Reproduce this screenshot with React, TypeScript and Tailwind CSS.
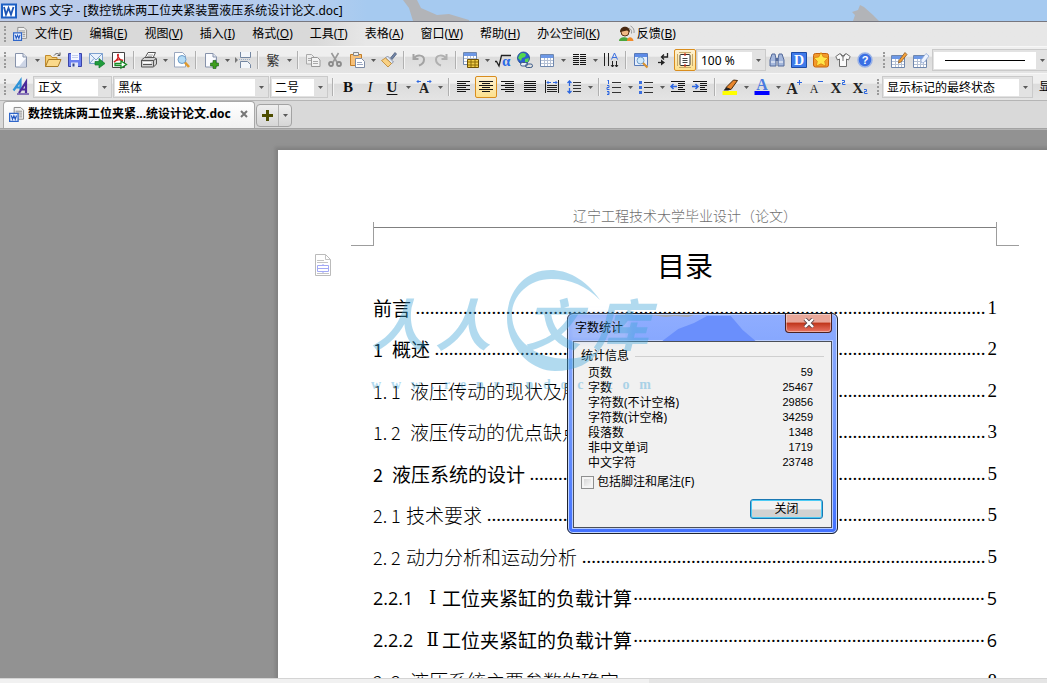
import type { ReactNode } from "react";
import clsx from "clsx";

const UI_FONT = "font-['Noto_Sans','Noto_Sans_CJK_SC',sans-serif]";
const HEI_FONT = "font-['Noto_Sans_CJK_SC',sans-serif]";

const MENUS = [
  ["文件", "F"],
  ["编辑", "E"],
  ["视图", "V"],
  ["插入", "I"],
  ["格式", "O"],
  ["工具", "T"],
  ["表格", "A"],
  ["窗口", "W"],
  ["帮助", "H"],
  ["办公空间", "K"],
];

type TocRow = {
  num?: string;
  roman?: string;
  title: string;
  dots: number;
  page: string;
  kind: "chapter" | "section" | "tight" | "sans";
};

const TOC: TocRow[] = [
  { title: "前言", dots: 120, page: "1", kind: "chapter" },
  { num: "1", title: "概述", dots: 116, page: "2", kind: "chapter" },
  { num: "1. 1", title: "液压传动的现状及展望", dots: 80, page: "2", kind: "section" },
  { num: "1. 2", title: "液压传动的优点缺点", dots: 84, page: "3", kind: "section" },
  { num: "2", title: "液压系统的设计", dots: 96, page: "5", kind: "chapter" },
  { num: "2. 1", title: "技术要求", dots: 105, page: "5", kind: "tight" },
  { num: "2. 2", title: "动力分析和运动分析", dots: 85, page: "5", kind: "tight" },
  { num: "2.2.1", roman: "Ⅰ", title: "工位夹紧缸的负载计算", dots: 74, page: "5", kind: "sans" },
  { num: "2.2.2", roman: "Ⅱ", title: "工位夹紧缸的负载计算", dots: 74, page: "6", kind: "sans" },
  { num: "2. 3", title: "液压系统主要参数的确定", dots: 76, page: "8", kind: "section" },
];

const NUM_WIDTH = {
  chapter: "w-[19px]",
  section: "w-[37px] font-light",
  tight: "w-[33px] font-light",
  sans: "w-[50px]",
};

const STATS = [
  ["页数", "59"],
  ["字数", "25467"],
  ["字符数(不计空格)", "29856"],
  ["字符数(计空格)", "34259"],
  ["段落数", "1348"],
  ["非中文单词", "1719"],
  ["中文字符", "23748"],
];

function Svg({ children, size = "size-4" }: { children: ReactNode; size?: string }) {
  return (
    <svg viewBox="0 0 16 16" className={clsx(size, "shrink-0 overflow-visible")} fill="none">
      {children}
    </svg>
  );
}

const Page = () => (
  <>
    <path d="M2.500 1.500h7.500l3.500 3.500v10h-11z" fill="#fbfcff" stroke="#8793ab" />
    <path d="M10 1.500v3.500h3.500" fill="#dfe5f0" stroke="#8793ab" />
    <path d="M6 14.500L13 6v8.500z" fill="#cdd5e6" />
  </>
);

const Lines = ({ rows }: { rows: [number, number][] }) => (
  <>
    {rows.map(([x, w], i) => (
      <path key={i} d={`M${x} ${2.5 + i * 2}h${w}`} stroke="#151515" />
    ))}
  </>
);

const Grid = ({ x = 1, y = 2 }: { x?: number; y?: number }) => (
  <g transform={`translate(${x} ${y})`}>
    <path d="M.5.5h13v12H.5z" fill="#fff" stroke="#6f87ad" />
    <path d="M1 1h12v3H1z" fill="#6d98e6" />
    <path d="M4.500 4v8M7.500 4v8M10.500 4v8M1 6.500h12M1 9.500h12" stroke="#b4c0d4" />
  </g>
);

const WpsDoc = () => (
  <>
    <path d="M5.500.5h7l3 3v9.500h-10z" fill="#f1f1f1" stroke="#858585" />
    <path d="M7 4.500h7M7 6.500h7M11 8.500h3M11 10.500h3" stroke="#8b8b8b" />
    <path d="M.7 6.700h9v8.600h-9z" fill="#eef5ff" stroke="#2f66c9" strokeWidth="1.400" />
    <path d="M2.500 9l1.200 4 1.500-3.500L6.700 13 8 9" stroke="#2459c2" strokeWidth="1.300" />
  </>
);

const icons = {
  newDoc: <Page />,
  open: (
    <>
      <path d="M.5 14.500v-11h5l1.500 2h5v2" fill="#f6cf74" stroke="#c18a2c" />
      <path d="M.5 14.500l3-7H16l-3 7z" fill="#fbd98a" stroke="#a77a25" />
      <path d="M9 3.500c2-2.500 4-2.500 5.500-.5M12.500 3.500h2.500v-3" stroke="#555" />
    </>
  ),
  save: (
    <>
      <path d="M1.500 1.500h13v13h-13z" fill="#6a7ff0" stroke="#3a44a8" />
      <path d="M4 1h8v7H4z" fill="#f4f7ff" />
      <path d="M5 3.500h6M5 5.500h6" stroke="#c3cdea" />
      <path d="M4 10.500h7v4.500H4z" fill="#e4e8f8" />
      <path d="M5.500 11.500h2v3h-2z" fill="#33447f" />
    </>
  ),
  mail: (
    <>
      <path d="M.5 1.500h13v10H.5z" fill="#e9f1fc" stroke="#7da0cf" />
      <path d="M.5 1.500L7 8l6.500-6.500M.5 11.500l4.500-5" stroke="#7da0cf" />
      <path d="M6 9.500h4v-3l6 5-6 4.500v-3H6z" fill="#1f9c3c" stroke="#13752a" strokeWidth=".7" />
    </>
  ),
  pdf: (
    <>
      <path d="M1.500.5h12v15h-12z" fill="#fff" stroke="#444" />
      <path d="M3 10c3-1.500 4.500-5 4.200-7.500C6 2 6.500 7.500 12 8.500 9 7 5 8 3 10z" stroke="#d32020" strokeWidth="1.400" />
      <path d="M4 11.500h6v-2.500l5.500 3.500-5.500 3.500v-2.500H4z" fill="#fff" stroke="#178a25" strokeWidth="1.300" />
    </>
  ),
  print: (
    <>
      <path d="M4 6l3-5.500h7.500L12 6" fill="#fff" stroke="#555" />
      <path d="M7 3h5M6 4.500h5" stroke="#aaa" />
      <path d="M.5 8l3-2.500h10l2 1.500v5l-3 3H.5z" fill="#d2d2d2" stroke="#555" />
      <path d="M.5 8.500h12v6M15.500 6.500l-3 2M2 12.500h9" stroke="#555" />
      <path d="M2 10h8v1.500H2z" fill="#fff" />
    </>
  ),
  preview: (
    <>
      <path d="M1.500.5h8l3 3v11.500h-11z" fill="#fff" stroke="#9aa7be" />
      <circle cx="9" cy="7.500" r="4" fill="#b4dcf6" stroke="#6d9cc9" />
      <path d="M12 10.500l4 4.500" stroke="#e09a2c" strokeWidth="2.600" />
    </>
  ),
  addPage: (
    <>
      <Page />
      <path d="M10 8.500h3v2.500h2.500v3H13v2.500h-3V14H7.500v-3H10z" fill="#3f9e1f" stroke="#155f15" strokeWidth=".6" />
    </>
  ),
  pageBreak: (
    <>
      <path d="M5.500 0v5.500h10V0M5.500 16v-6.500h7l3 3V16" fill="#f3f6fa" stroke="#7487a2" />
      <path d="M4 7.500h12" stroke="#9eb0c9" strokeDasharray="1 1" />
      <path d="M0 5l3 3-3 3z" fill="#777" />
    </>
  ),
  trad: (
    <text x="8" y="13" textAnchor="middle" fontSize="13" fill="#333" className={HEI_FONT}>
      繁
    </text>
  ),
  copy: (
    <>
      <path d="M1.500 2.500h5l2.500 2.500v7h-7.500z" fill="#eee" stroke="#aaa" />
      <path d="M6.500 5.500h6l2.500 2.500v6.500H6.500z" fill="#f3f3f3" stroke="#999" />
      <path d="M8 9.500h5M8 11.500h5M3 6.500h3M3 8.500h3" stroke="#aaa" />
    </>
  ),
  cut: (
    <>
      <path d="M4.500 1l6 10M11.500 1l-6 10" stroke="#999" strokeWidth="1.600" />
      <circle cx="4" cy="12" r="2" stroke="#8a8a8a" strokeWidth="1.800" />
      <circle cx="12" cy="12" r="2" stroke="#8a8a8a" strokeWidth="1.800" />
    </>
  ),
  paste: (
    <>
      <path d="M1.500 2.500h11v11h-11z" fill="#f7c078" stroke="#c27e28" />
      <path d="M4.500.5h5v3h-5z" fill="#eee" stroke="#888" />
      <path d="M6.500 6.500h6l3 3v6h-9z" fill="#fff" stroke="#7d8ba5" />
      <path d="M8 10.500h5M8 12.500h6" stroke="#9aa7c2" />
    </>
  ),
  brush: (
    <>
      <path d="M9.500 6L14 .5l1.500 1.500L11 7.500z" fill="#7186a8" stroke="#4c5c78" strokeWidth=".8" />
      <path d="M6.500 4l6 6-2 1.500-6-5.500z" fill="#dfe6f2" stroke="#76839c" strokeWidth=".8" />
      <path d="M4.500 6L.5 8.500l6.500 6.500 3.500-3.500z" fill="#f9d183" stroke="#ba8430" strokeWidth=".8" />
    </>
  ),
  undo: <path d="M2.500 2v5h5M3 6.500c3-4.500 10-3.500 10 1 0 3-2 5-5 6" stroke="#a3a3a3" strokeWidth="2" />,
  redo: <path d="M13.500 2v5h-5M13 6.500C10 2 3 3 3 7.500c0 3 2 5 5 6" stroke="#b0b0b0" strokeWidth="2" />,
  insertTable: (
    <>
      <Grid x={0} y={0} />
      <path d="M4.500 7.500h11v8h-11z" fill="#f2cf4a" stroke="#6d5005" />
      <path d="M5 10h10M5 13h10M8 8v7M12 8v7" stroke="#8a6a08" />
    </>
  ),
  formula: (
    <>
      <path d="M0 9.500h1.500L4 14 6.500 3.500H16" stroke="#222" strokeWidth="1.300" />
      <text x="7" y="14" fontSize="15" fontWeight="bold" fill="#2c6be6" className="font-['Liberation_Serif',serif]">
        α
      </text>
    </>
  ),
  globe: (
    <>
      <circle cx="6.500" cy="6" r="6" fill="#2b5fd0" stroke="#174488" strokeWidth=".8" />
      <path d="M3 2c2-1.500 5-1 6 .5L8 5 5 6 4 9 1 6zM8 7l4-1-1 4H8z" fill="#54d74f" />
      <rect x="3.500" y="10.500" width="7" height="3.500" rx="1.700" fill="#e7eef8" stroke="#3c5b88" />
      <rect x="8.500" y="12" width="7" height="3.500" rx="1.700" stroke="#3c5b88" />
    </>
  ),
  table: <Grid />,
  columns: (
    <path
      d="M2 2.500h6M2 4.500h6M2 6.500h6M2 8.500h6M2 10.500h6M2 12.500h6M9 2.500h6M9 4.500h6M9 6.500h6M9 8.500h6M9 10.500h6M9 12.500h6"
      stroke="#151515"
    />
  ),
  textDir: (
    <>
      <path d="M1.500 1v13M5.500 1v13M9.500 9v6M13.500 9v6M8 13l1.500 2 1.500-2M12 13l1.500 2 1.500-2" stroke="#222" />
      <path d="M8.500 7.500L11.500 1l3 6.500M9.500 5.500h4" stroke="#3b6fe0" />
    </>
  ),
  findWindow: (
    <>
      <path d="M1.500 1.500h13v12h-13z" fill="#e6effd" stroke="#587ab8" />
      <path d="M2 2h12v3H2z" fill="#5d8be8" />
      <circle cx="7.500" cy="8.500" r="3.500" fill="#cfe8fa" stroke="#6f9dca" />
      <path d="M10 11l4.500 4.500" stroke="#d79131" strokeWidth="2.200" />
    </>
  ),
  marks: (
    <>
      <path d="M12.500 1v4H7M9 2.500L6.500 5 9 7.500" stroke="#222" strokeWidth="1.300" />
      <path d="M3 10.500h5" stroke="#222" strokeWidth="1.300" />
      <path d="M6 7.500l4 3-4 3z" fill="#222" />
    </>
  ),
  fitPage: (
    <>
      <path d="M.5 2v12M15.500 2v12M2 .5h12M2 15.500h12" stroke="#c7a96b" />
      <rect x="3" y="2.500" width="10" height="11" rx="1" fill="#fff" stroke="#333" />
      <path d="M5.500 6.500h5M5.500 8.500h5M5.500 10.500h5" stroke="#444" />
      <path d="M8 1v3M8 12v3" stroke="#e0301e" strokeWidth="1.200" />
    </>
  ),
  find: (
    <>
      <path d="M3 2h3l1 5v7H1V8zM10 2h3l2 6v6H9V7z" fill="#a4b7dc" stroke="#546a9a" />
      <path d="M6.500 6h3v3h-3z" fill="#546a9a" />
      <path d="M2 10h4M10 10h4" stroke="#fff" />
    </>
  ),
  dict: (
    <>
      <path d="M.5.5h15v15H.5z" fill="#3f7bea" stroke="#1d4ba6" />
      <text x="8" y="13" textAnchor="middle" fontSize="14" fontWeight="bold" fill="#fff" className="font-['Liberation_Serif',serif]">
        D
      </text>
    </>
  ),
  star: (
    <>
      <rect x=".5" y="1.500" width="15" height="13.500" rx="2" fill="#f39a2c" stroke="#c4620c" />
      <path d="M8 .5l2.300 4.500 5 .7-3.600 3.500 1 5L8 11.800l-4.700 2.400 1-5L.7 5.700l5-.7z" fill="#ffe64a" stroke="#d9820c" strokeWidth=".8" />
    </>
  ),
  shirt: (
    <>
      <path d="M5 1.500L.8 4.500l1.700 3.500 2-1v7.500h7V7l2 1 1.700-3.500L11 1.500 8 4z" fill="#fafafa" stroke="#6e6e6e" />
      <path d="M5.500 2L8 5.500 10.500 2M8 5.500V9" stroke="#6e6e6e" />
    </>
  ),
  help: (
    <>
      <circle cx="8" cy="8" r="7" fill="#3b6fe4" stroke="#9bb3e6" strokeWidth="1.500" />
      <text x="8" y="12" textAnchor="middle" fontSize="11" fontWeight="bold" fill="#fff" className="font-['Liberation_Sans',sans-serif]">
        ?
      </text>
    </>
  ),
  drawTable: (
    <>
      <Grid x={0} y={3} />
      <path d="M8 8.500L14 .5l2 2-6 7.500-2.500 1z" fill="#f5a13a" stroke="#8b5a22" strokeWidth=".8" />
    </>
  ),
  eraseTable: (
    <>
      <Grid x={0} y={3} />
      <path d="M8 8l5-6.500 3 2.500-5 6.500-2.500.5z" fill="#edf3ff" stroke="#8fa8d4" strokeWidth=".8" />
    </>
  ),
  styles: (
    <>
      <path d="M.5 11.500L7.500 1.500V11M3 8.500h5" stroke="#2f93d8" strokeWidth="2.200" />
      <path d="M6 14L13 3v11M8.500 10.500H13" stroke="#4a2a9a" strokeWidth="2.200" />
      <path d="M4 15h12" stroke="#4a2a9a" strokeWidth="1.200" />
    </>
  ),
  charScale: (
    <>
      <text x="8" y="14" textAnchor="middle" fontSize="14" fontWeight="bold" fill="#222" className="font-['Liberation_Serif',serif]">
        A
      </text>
      <path d="M1 2.500h4M2.500 1L1 2.500 2.500 4M11 2.500h4M13.500 1L15 2.500 13.500 4" stroke="#2c66e0" />
    </>
  ),
  alignLeft: <Lines rows={[[1, 13], [1, 9], [1, 13], [1, 9], [1, 13], [1, 9]]} />,
  alignCenter: <Lines rows={[[1, 14], [4, 8], [1, 14], [4, 8], [1, 14], [4, 8]]} />,
  alignRight: <Lines rows={[[1, 13], [5, 9], [1, 13], [5, 9], [1, 13], [5, 9]]} />,
  justify: <Lines rows={[[2, 12], [2, 12], [2, 12], [2, 12], [2, 12], [2, 12]]} />,
  distribute: (
    <>
      <path d="M1.500 1v13M14.500 1v13M3 6.500h10M3 8.500h10M3 10.500h10M3 12.500h10" stroke="#222" />
      <path d="M3 3.500h4M9 3.500h4M4.500 2L3 3.500 4.500 5M11.500 2L13 3.500 11.500 5" stroke="#2c66e0" />
    </>
  ),
  spacing: (
    <>
      <path d="M7 3.500h8M7 6.500h8M7 9.500h8M7 12.500h8" stroke="#333" />
      <path d="M3.500 2v5M3.500 9v5M1.500 4l2-2 2 2M1.500 12l2 2 2-2" stroke="#2c66e0" strokeWidth="1.300" />
    </>
  ),
  numbered: (
    <>
      <path d="M6 3.500h9M6 8.500h9M6 13.500h9" stroke="#333" />
      <path d="M2.500 1v4M1.500 1.500h1M1 6.500h2v2H1v2h2.500M1 12.500h2v3H1M1.500 14h1.500" stroke="#2c66e0" />
    </>
  ),
  bullets: (
    <>
      <path d="M6 3.500h9M6 8.500h9M6 13.500h9" stroke="#333" />
      <path d="M1 2h3v3H1zM1 7h3v3H1zM1 12h3v3H1z" fill="#3b6fe0" />
    </>
  ),
  outdent: (
    <>
      <path d="M1 2.500h14M8 4.500h7M8 6.500h7M8 8.500h5M8 10.500h7M1 12.500h14" stroke="#151515" />
      <path d="M1 7.500h6M3.500 5L1 7.500 3.500 10" stroke="#2c66e0" strokeWidth="1.500" />
    </>
  ),
  indent: (
    <>
      <path d="M1 2.500h14M8 4.500h7M8 6.500h7M8 8.500h5M8 10.500h7M1 12.500h14" stroke="#151515" />
      <path d="M0 7.500h6M3.500 5L6 7.500 3.500 10" stroke="#2c66e0" strokeWidth="1.500" />
    </>
  ),
  highlight: (
    <>
      <path d="M4 8.500L11.500 1l4 .5-6.500 9z" fill="#e8852c" stroke="#4a2b0a" />
      <path d="M4 8.500L1.500 11.500h4.500l3-1z" fill="#222" />
      <path d="M.5 12H15v4H.5z" fill="#ff0" />
    </>
  ),
  fontColor: (
    <>
      <text x="8" y="11" textAnchor="middle" fontSize="16" fontWeight="bold" fill="#4a7be0" className="font-['Liberation_Serif',serif]">
        A
      </text>
      <path d="M.5 12h15v4H.5z" fill="#00f" />
    </>
  ),
  grow: (
    <>
      <text x="6" y="14.500" textAnchor="middle" fontSize="16" fontWeight="bold" fill="#222" className="font-['Liberation_Serif',serif]">
        A
      </text>
      <path d="M11 3.500h5M13.500 1v5" stroke="#2c66e0" />
    </>
  ),
  shrink: (
    <>
      <text x="6" y="14" textAnchor="middle" fontSize="12" fill="#222" className="font-['Liberation_Serif',serif]">
        A
      </text>
      <path d="M10 2.500h5" stroke="#2c66e0" />
    </>
  ),
  superscript: (
    <>
      <text x="6" y="13.500" textAnchor="middle" fontSize="15" fontWeight="bold" fill="#222" className="font-['Liberation_Serif',serif]">
        X
      </text>
      <path d="M12 1.500h2.500v2H12.500v2h3" stroke="#2c66e0" />
    </>
  ),
  subscript: (
    <>
      <text x="6" y="13.500" textAnchor="middle" fontSize="15" fontWeight="bold" fill="#222" className="font-['Liberation_Serif',serif]">
        X
      </text>
      <path d="M12 10.500h2.500v2H12.500v2h3" stroke="#2c66e0" />
    </>
  ),
};

type IconName = keyof typeof icons;

function Tool({ icon, label, active }: { icon: IconName; label: string; active?: boolean }) {
  return (
    <button
      type="button"
      aria-label={label}
      className={clsx(
        "flex h-[22px] w-[22px] shrink-0 items-center justify-center",
        active && "rounded-xs border border-[#d98d1e] bg-gradient-to-b from-[#fdf1d3] to-[#fde08c]",
      )}
    >
      <Svg>{icons[icon]}</Svg>
    </button>
  );
}

function LetterTool({ children, label, className }: { children: ReactNode; label: string; className?: string }) {
  return (
    <button
      type="button"
      aria-label={label}
      className={clsx("w-[22px] shrink-0 text-center font-['Liberation_Serif',serif] text-[15px] leading-[22px] text-[#111]", className)}
    >
      {children}
    </button>
  );
}

function Caret() {
  return (
    <svg viewBox="0 0 5 3" className="h-[3px] w-[5px] shrink-0" fill="#5a5a5a">
      <path d="M0 0h5L2.500 3z" />
    </svg>
  );
}

function Drop({ label }: { label: string }) {
  return (
    <button type="button" aria-label={label} className="flex h-[22px] w-[10px] shrink-0 items-center justify-center">
      <Caret />
    </button>
  );
}

function Sep() {
  return (
    <span className="flex w-2 shrink-0 justify-center">
      <span className="h-[18px] w-[2px] border-l border-r border-l-[#b0b0b0] border-r-[#f4f4f4]" />
    </span>
  );
}

function Grip({ className }: { className?: string }) {
  return (
    <span className={clsx("flex shrink-0 justify-center", className)}>
      <span className="h-4 w-0 border-l-2 border-dotted border-[#9a9a9a]" />
    </span>
  );
}

function Combo({ value, label, width, line }: { value: string; label: string; width: string; line?: boolean }) {
  return (
    <span className={clsx("relative flex h-[22px] shrink-0 items-center border border-[#cacaca] bg-[#e2e2e2] p-px", width)}>
      <select aria-label={label} className="h-[17px] min-w-0 flex-1 appearance-none bg-white pl-[3px] text-[12px] leading-[17px] text-black">
        <option>{value}</option>
      </select>
      {line && <span className="absolute left-3 right-6 h-px bg-black" />}
      <span className="flex w-3 justify-center">
        <Caret />
      </span>
    </span>
  );
}

function TitleBar() {
  return (
    <header className="flex h-[22px] shrink-0 items-center gap-1 border-b border-[#77777f] bg-[#a6caf0] bg-gradient-to-r from-[#bccbea] via-[#b4cdee] via-30% to-[#a6caf0] to-35% pl-px text-[12px] text-black">
      <Svg>
        <path d="M0 .5h16v15H0z" fill="#1c5fc4" />
        <path d="M2 2.500h12v11H2z" fill="#fff" />
        <path d="M3 4l2 7.500L7.500 5 10 11.500 12.500 4" stroke="#1d55b5" strokeWidth="1.800" />
      </Svg>
      <h1 className="whitespace-nowrap">WPS 文字 - [数控铣床两工位夹紧装置液压系统设计论文.doc]</h1>
      <svg viewBox="0 0 480 21" className="ml-[52px] h-[21px] w-[480px]" fill="#b2b4b8">
        <path d="M4 0h14l4 8 16 7 12-1 20 6v1H14L10 8z" />
        <path d="M461 5l4 2 9 8 6 6h-26l2-6-3-3 6-2z" />
      </svg>
    </header>
  );
}

function MenuBar() {
  return (
    <nav className="flex h-6 shrink-0 items-center bg-gradient-to-r from-[#d9d9d9] from-30% to-[#e7e7e7] to-35% text-[12px] text-black">
      <Grip className="w-[10px]" />
      <span className="flex w-[17px] justify-end">
        <Svg size="size-[14px]">
          <WpsDoc />
        </Svg>
      </span>
      <ul className="flex gap-px">
        {MENUS.map(([name, key]) => (
          <li key={key}>
            <button type="button" className="whitespace-nowrap px-2">
              {name}(<u>{key}</u>)
            </button>
          </li>
        ))}
      </ul>
      <button type="button" className="ml-[11px] flex items-center gap-0.5 whitespace-nowrap">
        <Svg>
          <circle cx="6" cy="6" r="4" fill="#f3b985" stroke="#5b3314" />
          <path d="M1 6c0-7 10-7 10 0L8 4.500z" fill="#4a2a12" />
          <path d="M0 15c0-5 10-5 10 0z" fill="#4ba63c" />
          <path d="M8 15c0-5 6-5 6.500 0z" fill="#f08b2a" />
          <path d="M10 2c2 1 3 3 2.500 5.500M11.500 0c3 1.500 4 4 3.500 7" stroke="#999" />
        </Svg>
        <span>
          反馈(<u>B</u>)
        </span>
      </button>
    </nav>
  );
}

const BAR =
  "flex h-[27px] shrink-0 items-center overflow-hidden border-t border-[#f7f7f7] bg-gradient-to-b from-[#efefef] from-35% via-[#dcdcdc] via-40% to-[#e4e4e4]";

function StandardBar() {
  return (
    <div className={BAR}>
      <Grip className="w-[10px]" />
      <Tool icon="newDoc" label="新建" />
      <Drop label="新建选项" />
      <Tool icon="open" label="打开" />
      <Tool icon="save" label="保存" />
      <Tool icon="mail" label="邮件" />
      <Tool icon="pdf" label="输出为 PDF" />
      <Sep />
      <Tool icon="print" label="打印" />
      <Drop label="打印选项" />
      <Tool icon="preview" label="打印预览" />
      <Sep />
      <Tool icon="addPage" label="插入页" />
      <Drop label="插入页选项" />
      <Tool icon="pageBreak" label="分页符" />
      <Sep />
      <Tool icon="trad" label="繁体" />
      <Drop label="繁体选项" />
      <Sep />
      <Tool icon="copy" label="复制" />
      <Tool icon="cut" label="剪切" />
      <Tool icon="paste" label="粘贴" />
      <Drop label="粘贴选项" />
      <Tool icon="brush" label="格式刷" />
      <Sep />
      <Tool icon="undo" label="撤销" />
      <Tool icon="redo" label="恢复" />
      <Sep />
      <Tool icon="insertTable" label="插入表格" />
      <Drop label="表格选项" />
      <Tool icon="formula" label="公式" />
      <Tool icon="globe" label="超链接" />
      <Tool icon="table" label="表格" />
      <Drop label="网格选项" />
      <Tool icon="columns" label="分栏" />
      <Drop label="分栏选项" />
      <Tool icon="textDir" label="文字方向" />
      <Sep />
      <Tool icon="findWindow" label="导航" />
      <Tool icon="marks" label="段落标记" />
      <Tool icon="fitPage" label="页面视图" active />
      <Combo value="100 %" label="显示比例" width="w-[70px]" />
      <Tool icon="find" label="查找" />
      <Tool icon="dict" label="词典" />
      <Tool icon="star" label="素材" />
      <Tool icon="shirt" label="换肤" />
      <Tool icon="help" label="帮助" />
      <Grip className="ml-1 w-2" />
      <Tool icon="drawTable" label="绘制表格" />
      <Tool icon="eraseTable" label="擦除表格" />
      <Combo value="" label="线型" width="w-[118px]" line />
    </div>
  );
}

function FormatBar() {
  return (
    <div className={BAR}>
      <Grip className="w-[10px]" />
      <Tool icon="styles" label="样式和格式" />
      <span className="flex gap-px px-px">
        <Combo value="正文" label="样式" width="w-[79px]" />
        <Combo value="黑体" label="字体" width="w-[156px]" />
        <Combo value="二号" label="字号" width="w-[58px]" />
      </span>
      <Sep />
      <LetterTool label="加粗" className="font-bold">B</LetterTool>
      <LetterTool label="倾斜" className="italic">I</LetterTool>
      <LetterTool label="下划线" className="font-bold underline underline-offset-2">U</LetterTool>
      <Drop label="下划线选项" />
      <Tool icon="charScale" label="字符缩放" />
      <Drop label="缩放选项" />
      <Sep />
      <Tool icon="alignLeft" label="左对齐" />
      <Tool icon="alignCenter" label="居中" active />
      <Tool icon="alignRight" label="右对齐" />
      <Tool icon="justify" label="两端对齐" />
      <Tool icon="distribute" label="分散对齐" />
      <Tool icon="spacing" label="行距" />
      <Drop label="行距选项" />
      <Sep />
      <Tool icon="numbered" label="编号" />
      <Drop label="编号选项" />
      <Tool icon="bullets" label="项目符号" />
      <Drop label="符号选项" />
      <Tool icon="outdent" label="减少缩进" />
      <Tool icon="indent" label="增加缩进" />
      <Sep />
      <Tool icon="highlight" label="突出显示" />
      <Drop label="突出显示选项" />
      <Tool icon="fontColor" label="字体颜色" />
      <Drop label="颜色选项" />
      <Tool icon="grow" label="增大字号" />
      <Tool icon="shrink" label="减小字号" />
      <Tool icon="superscript" label="上标" />
      <Tool icon="subscript" label="下标" />
      <Grip className="ml-[3px] w-2" />
      <Combo value="显示标记的最终状态" label="审阅状态" width="w-[151px]" />
      <button type="button" className="ml-[6px] shrink-0 text-[12px]">显示</button>
    </div>
  );
}

function TabBar() {
  return (
    <div className="flex h-[29px] shrink-0 items-end border-b border-t border-b-[#a3a3a3] border-t-[#b5b5b5] bg-[#d9d9d9] pl-[3px] text-[12px]">
      <div className="flex h-[27px] w-[252px] items-center rounded-t-sm border border-b-0 border-[#a8a8a8] bg-gradient-to-b from-white to-[#f1f1f1] pb-0.5 pl-[5px] pr-[6px]">
        <Svg size="size-[15px]">
          <WpsDoc />
        </Svg>
        <span className="flex-1 whitespace-nowrap pl-1 font-bold text-black">数控铣床两工位夹紧...统设计论文.doc</span>
        <button type="button" aria-label="关闭标签">
          <svg viewBox="0 0 8 8" className="size-2" stroke="#777" strokeWidth="2">
            <path d="M1 1l6 6M7 1L1 7" />
          </svg>
        </button>
      </div>
      <div className="mb-px ml-px flex h-[23px] rounded-sm border border-[#a3a3a3] bg-gradient-to-b from-[#efefef] to-[#d6d6d6]">
        <button type="button" aria-label="新建标签" className="flex w-[21px] items-center justify-center">
          <svg viewBox="0 0 11 11" className="size-[11px]" stroke="#4d4d00" strokeWidth="3">
            <path d="M5.500 0v11M0 5.500h11" />
          </svg>
        </button>
        <button type="button" aria-label="标签列表" className="flex w-[13px] items-center justify-center border-l border-[#b5b5b5]">
          <Caret />
        </button>
      </div>
    </div>
  );
}

function TocLine({ row }: { row: TocRow }) {
  const sans = row.kind === "sans";
  const light = row.kind === "section" || row.kind === "tight";
  const digits = sans ? "font-['Open_Sans',sans-serif] text-[18px]" : "font-['Liberation_Serif',serif]";
  return (
    <li className="flex items-center whitespace-nowrap text-[19px] leading-[28px]">
      {row.num && (
        <span className={clsx("text-[18px]", NUM_WIDTH[row.kind], sans ? "font-['Open_Sans',sans-serif]" : HEI_FONT)}>{row.num}</span>
      )}
      {row.roman && <span className="w-[19px] text-center font-['DejaVu_Serif',serif] text-[18px]">{row.roman}</span>}
      <span className={clsx(HEI_FONT, light && "font-light")}>{row.title}</span>
      {/* the leader of the third level sits at mid height */}
      <span className={clsx("flex-1 text-right font-['Liberation_Serif',serif]", sans && "pb-2")}>{".".repeat(row.dots)}</span>
      <span className={clsx("pl-0.5", digits)}>{row.page}</span>
    </li>
  );
}

function Watermark() {
  return (
    <div className="pointer-events-none absolute left-[371px] top-[138px] h-[127px] w-[280px] text-[#3fa5d9] opacity-40">
      <svg viewBox="0 0 280 110" className="absolute left-0 top-0 h-[110px] w-[280px] overflow-visible" fill="currentColor">
        <path d="M229 32C214 10 195 2 180 2 150 2 136 28 136 50c0 30 24 53 48 53 21 0 36-8 45-21-14 8-29 10-45 8-24-4-42-20-43-42-1-20 17-37 39-37 20 0 35 7 49 21z" />
      </svg>
      <div className={clsx("absolute left-0 top-[18px] flex h-[72px] items-center text-[56px] font-bold italic leading-[72px]", HEI_FONT)}>
        <span>人</span>
        <span className="ml-2">人</span>
        <span className="ml-[34px]">文</span>
        <span className="ml-3">库</span>
      </div>
      <div className="absolute bottom-0 left-0 flex w-full justify-between font-['Liberation_Serif',serif] text-[14px] font-bold leading-[20px]">
        {"www.renrendoc.com".split("").map((c, i) => (
          <span key={i}>{c}</span>
        ))}
      </div>
    </div>
  );
}

function CountDialog() {
  return (
    <section
      role="dialog"
      aria-label="字数统计"
      className="absolute left-[567px] top-[183px] flex h-[221px] w-[271px] flex-col rounded-md border border-[#20242c] bg-[#4f7bff] bg-gradient-to-b from-[#8fadff] via-[#7097fb] to-[#4371ff] px-[5px] pb-[5px] text-[12px] text-black shadow-[inset_0_0_0_1px_#c3d6ff]"
    >
      <div className="relative flex h-[27px] items-center justify-between">
        <svg viewBox="0 0 261 26" className="absolute inset-x-0 top-px h-[26px] w-full">
          <path d="M90 26l16-12 16-6 13-7h24l12 14 13 11z" fill="#6a8ffc" />
          <path d="M78 0h44l-6 2-14-1-8 1z" fill="#a4a6ae" />
        </svg>
        <h2 className="relative bg-[#b0c4f6]/60 px-[2px] leading-[18px] shadow-[0_0_6px_4px_#b0c4f699]">字数统计</h2>
        <button
          type="button"
          aria-label="关闭窗口"
          className="relative flex h-[19px] w-[47px] items-center justify-center self-start rounded-b-sm border border-t-0 border-[#4b2222] bg-gradient-to-b from-[#e9a799] from-45% via-[#bf3417] via-50% to-[#ea7463] shadow-[inset_0_0_0_1px_#ffffff66]"
        >
          <svg viewBox="0 0 12 10" className="h-[10px] w-3" fill="none">
            <path d="M2 1l8 8M10 1L2 9" stroke="#61464a" strokeWidth="4" />
            <path d="M2 1l8 8M10 1L2 9" stroke="#fff" strokeWidth="2.400" />
          </svg>
        </button>
      </div>
      <div className="flex flex-1 flex-col border border-[#4b4f58] bg-[#f1f1f1] px-[7px] pt-[5px] shadow-[0_0_0_1px_#b7ccff]">
        <div className="flex items-center gap-[6px] leading-[18px]">
          <h3>统计信息</h3>
          <span className="h-px flex-1 bg-[#cfcfcf]" />
        </div>
        <table className="mx-[7px] mr-[11px] leading-[15px]">
          <tbody>
            {STATS.map(([name, value]) => (
              <tr key={name}>
                <th className="h-[15px] p-0 text-left font-normal">{name}</th>
                <td className="p-0 text-right font-['Liberation_Sans',sans-serif] text-[11px]">{value}</td>
              </tr>
            ))}
          </tbody>
        </table>
        <label className="mt-[3px] flex items-center gap-[3px] leading-[18px]">
          <input
            type="checkbox"
            className="size-[13px] appearance-none border border-[#8e8f8f] bg-gradient-to-br from-[#cfcfcf] to-white shadow-[inset_0_0_0_2px_#f4f4f4]"
          />
          包括脚注和尾注(F)
        </label>
        <button
          type="button"
          className="mr-px mt-[8px] h-5 w-[73px] self-end rounded-[3px] border border-[#1b78b3] bg-gradient-to-b from-[#f1f1f1] from-50% to-[#d2d2d2] to-55% leading-[16px] shadow-[inset_0_0_0_1px_#4ccbf5]"
        >
          关闭
        </button>
      </div>
    </section>
  );
}

function Document() {
  return (
    <main className="relative min-h-0 flex-1 overflow-hidden border-t border-[#b4b4b4] bg-[#929292]">
      <article className="ml-[278px] mt-[20px] bg-white pb-8 shadow-[0_0_3px_3px_#828282]">
        <div className="relative ml-[73px] w-[668px] px-[22px] pt-[55px]">
          <svg viewBox="0 0 16 22" className="absolute -left-9 top-[104px] h-[22px] w-4" fill="none">
            <path d="M.5.5h10l5 5v16H.5z" fill="#fff" stroke="#bbb" />
            <path d="M10.500.5v5h5M2 6.500h7M2 8.500h11M2 19.500h12" stroke="#c4c4c4" />
            <path d="M2.500 11.500h11v6h-11zM3 14.500h10M8 10v2M8 17v2" stroke="#a3a9f5" />
          </svg>
          <p className="border-b border-[#808080] pb-px text-center font-['Noto_Sans_CJK_SC',sans-serif] text-[14px] font-light leading-[21px] text-[#6f6f6f]">
            辽宁工程技术大学毕业设计（论文）
          </p>
          <div className="absolute inset-x-0 top-[72px] flex h-6 justify-between">
            <span className="w-[23px] border-b border-r border-[#9d9d9d]" />
            <span className="w-[23px] border-b border-l border-[#9d9d9d]" />
          </div>
          <h2 className={clsx("pt-[15px] text-center text-[28px] leading-[44px] text-black", HEI_FONT)}>目录</h2>
          <ol className="grid h-[415px] auto-rows-fr grid-cols-1 text-black">
            {TOC.map((row, i) => (
              <TocLine key={i} row={row} />
            ))}
          </ol>
        </div>
      </article>
      <CountDialog />
      <Watermark />
    </main>
  );
}

export default function App() {
  return (
    <div className={clsx("flex h-screen flex-col overflow-hidden", UI_FONT)}>
      <TitleBar />
      <MenuBar />
      <StandardBar />
      <FormatBar />
      <TabBar />
      <Document />
      <footer className="h-[5px] shrink-0 border-t border-[#d4d4d4] bg-gradient-to-r from-[#f1f1f1] from-62% to-[#e5e5e5] to-62%" />
    </div>
  );
}
